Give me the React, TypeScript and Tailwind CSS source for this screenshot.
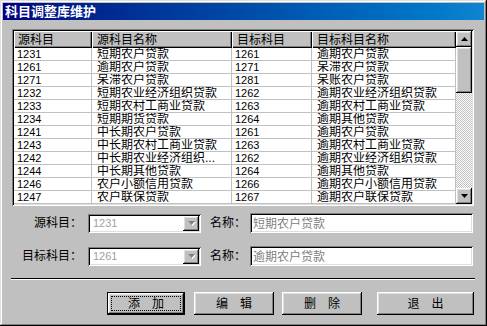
import React from "react";

const raised =
    "shadow-[inset_-1px_-1px_#000,inset_1px_1px_#fff,inset_-2px_-2px_#808080,inset_2px_2px_#dfdfdf]";
const sunken =
    "shadow-[inset_1px_1px_#808080,inset_-1px_-1px_#fff,inset_2px_2px_#000,inset_-2px_-2px_#dfdfdf]";

const rows: [string, string, string, string][] = [
    ["1231", "短期农户贷款", "1261", "逾期农户贷款"],
    ["1261", "逾期农户贷款", "1271", "呆滞农户贷款"],
    ["1271", "呆滞农户贷款", "1281", "呆账农户贷款"],
    ["1232", "短期农业经济组织贷款", "1262", "逾期农业经济组织贷款"],
    ["1233", "短期农村工商业贷款", "1263", "逾期农村工商业贷款"],
    ["1234", "短期期货贷款", "1264", "逾期其他贷款"],
    ["1241", "中长期农户贷款", "1261", "逾期农户贷款"],
    ["1243", "中长期农村工商业贷款", "1263", "逾期农村工商业贷款"],
    ["1242", "中长期农业经济组织...", "1262", "逾期农业经济组织贷款"],
    ["1244", "中长期其他贷款", "1264", "逾期其他贷款"],
    ["1246", "农户小额信用贷款", "1266", "逾期农户小额信用贷款"],
    ["1247", "农户联保贷款", "1267", "逾期农户联保贷款"],
];

const cols = ["w-[78px]", "w-[140px]", "w-[80px]", "w-[144px]"];
const headers = ["源科目", "源科目名称", "目标科目", "目标科目名称"];

const Arrow = ({up, disabled}: { up?: boolean; disabled?: boolean }) => (
    <svg width="7" height="5" viewBox="0 0 7 5" className={disabled ? "drop-shadow-[1px_1px_0_#fff]" : ""}>
        <polygon
            points={up ? "3.5,0 7,4 0,4" : "0,0 7,0 3.5,4"}
            fill={disabled ? "#808080" : "#000"}
        />
    </svg>
);

const ScrollBtn = ({up}: { up?: boolean }) => (
    <div className={`w-[16px] h-[16px] bg-[#c0c0c0] flex items-center justify-center ${raised}`}>
        <Arrow up={up}/>
    </div>
);

const Combo = ({value}: { value: string }) => (
    <div className={`w-[113px] h-[19px] bg-white flex items-center p-[2px] ${sunken}`}>
        <span className="flex-1 pl-[3px] text-[11px] text-[#a0a0a0] font-['Liberation_Sans']">{value}</span>
        <div className={`w-[16px] h-[15px] bg-[#c0c0c0] flex items-center justify-center ${raised}`}>
            <Arrow disabled/>
        </div>
    </div>
);

const TextBox = ({value}: { value: string }) => (
    <div className={`w-[223px] h-[20px] bg-white flex items-center pl-[3px] pt-[1px] text-[#808080] ${sunken}`}>
        {value}
    </div>
);

const Btn = ({label, w, def}: { label: string; w: string; def?: boolean }) => (
    <div className={`${w} h-[23px] ${def ? "border border-black" : ""}`}>
        <div className={`w-full h-full bg-[#c0c0c0] flex items-center justify-center p-[3px] ${raised}`}>
            <div className={`w-full h-full flex items-center justify-center ${def ? "border border-dotted border-black" : ""}`}>
                {label}
            </div>
        </div>
    </div>
);

export default function App() {
    return (
        <div
            className="w-[487px] h-[326px] bg-[#c0c0c0] p-[3px] flex flex-col text-[12px] text-black font-['Liberation_Sans','Noto_Sans_CJK_SC',sans-serif] shadow-[inset_-1px_-1px_#000,inset_1px_1px_#dfdfdf,inset_-2px_-2px_#808080,inset_2px_2px_#fff]">
            <div className="h-[17px] bg-gradient-to-r from-[#000080] to-[#1084d0] flex items-center pl-[2px]">
                <span className="text-white font-bold text-[13px] leading-none">科目调整库维护</span>
            </div>

            <div className="pl-[9px] pr-[10px] pt-[9px] flex flex-col">
                {/* grid */}
                <div className={`w-[462px] h-[177px] p-[2px] bg-white flex ${sunken}`}>
                    <div className="w-[442px] flex flex-col">
                        <div className="flex h-[17px]">
                            {headers.map((h, i) => (
                                <div key={h}
                                     className={`${cols[i]} h-full bg-[#c0c0c0] flex items-center ${i === 0 ? "pl-[4px]" : "pl-[5px]"} shadow-[inset_1px_1px_#fff,inset_-1px_-1px_#000,inset_-2px_-2px_#808080]`}>
                                    {h}
                                </div>
                            ))}
                        </div>
                        {rows.map((r, ri) => (
                            <div key={ri} className="flex h-[13px]">
                                {r.map((c, i) => (
                                    <div key={i}
                                         className={`${cols[i]} h-full border-r border-b border-[#c0c0c0] flex items-center overflow-hidden whitespace-nowrap leading-[12px] ${i % 2 === 0 ? "pl-[3px] text-[11px]" : "pl-[5px]"}`}>
                                        {c}
                                    </div>
                                ))}
                            </div>
                        ))}
                    </div>
                    <div className="w-[16px] flex flex-col">
                        <ScrollBtn up/>
                        <div className="flex-1 flex flex-col bg-[repeating-conic-gradient(#c0c0c0_0_25%,#fff_0_50%)] bg-[length:2px_2px]">
                            <div className={`h-[46px] bg-[#c0c0c0] ${raised}`}/>
                        </div>
                        <ScrollBtn/>
                    </div>
                </div>

                {/* form */}
                <div className="flex items-center mt-[7px] h-[20px]">
                    <div className="w-[70px] text-right">源科目：</div>
                    <div className="ml-[6px]"><Combo value="1231"/></div>
                    <div className="ml-[9px] w-[40px]">名称：</div>
                    <TextBox value="短期农户贷款"/>
                </div>
                <div className="flex items-center mt-[13px] h-[20px]">
                    <div className="w-[70px] text-right">目标科目：</div>
                    <div className="ml-[6px]"><Combo value="1261"/></div>
                    <div className="ml-[9px] w-[40px]">名称：</div>
                    <TextBox value="逾期农户贷款"/>
                </div>

                <div className="mt-[12px] -ml-[1px] w-[464px] border-t border-black border-b border-b-white"/>

                <div className="flex mt-[12px] pl-[95px]">
                    <Btn label="添　加" w="w-[79px]" def/>
                    <div className="ml-[9px]"><Btn label="编　辑" w="w-[80px]"/></div>
                    <div className="ml-[8px]"><Btn label="删　除" w="w-[80px]"/></div>
                    <div className="ml-[15px]"><Btn label="退　出" w="w-[97px]"/></div>
                </div>
            </div>
        </div>
    );
}
